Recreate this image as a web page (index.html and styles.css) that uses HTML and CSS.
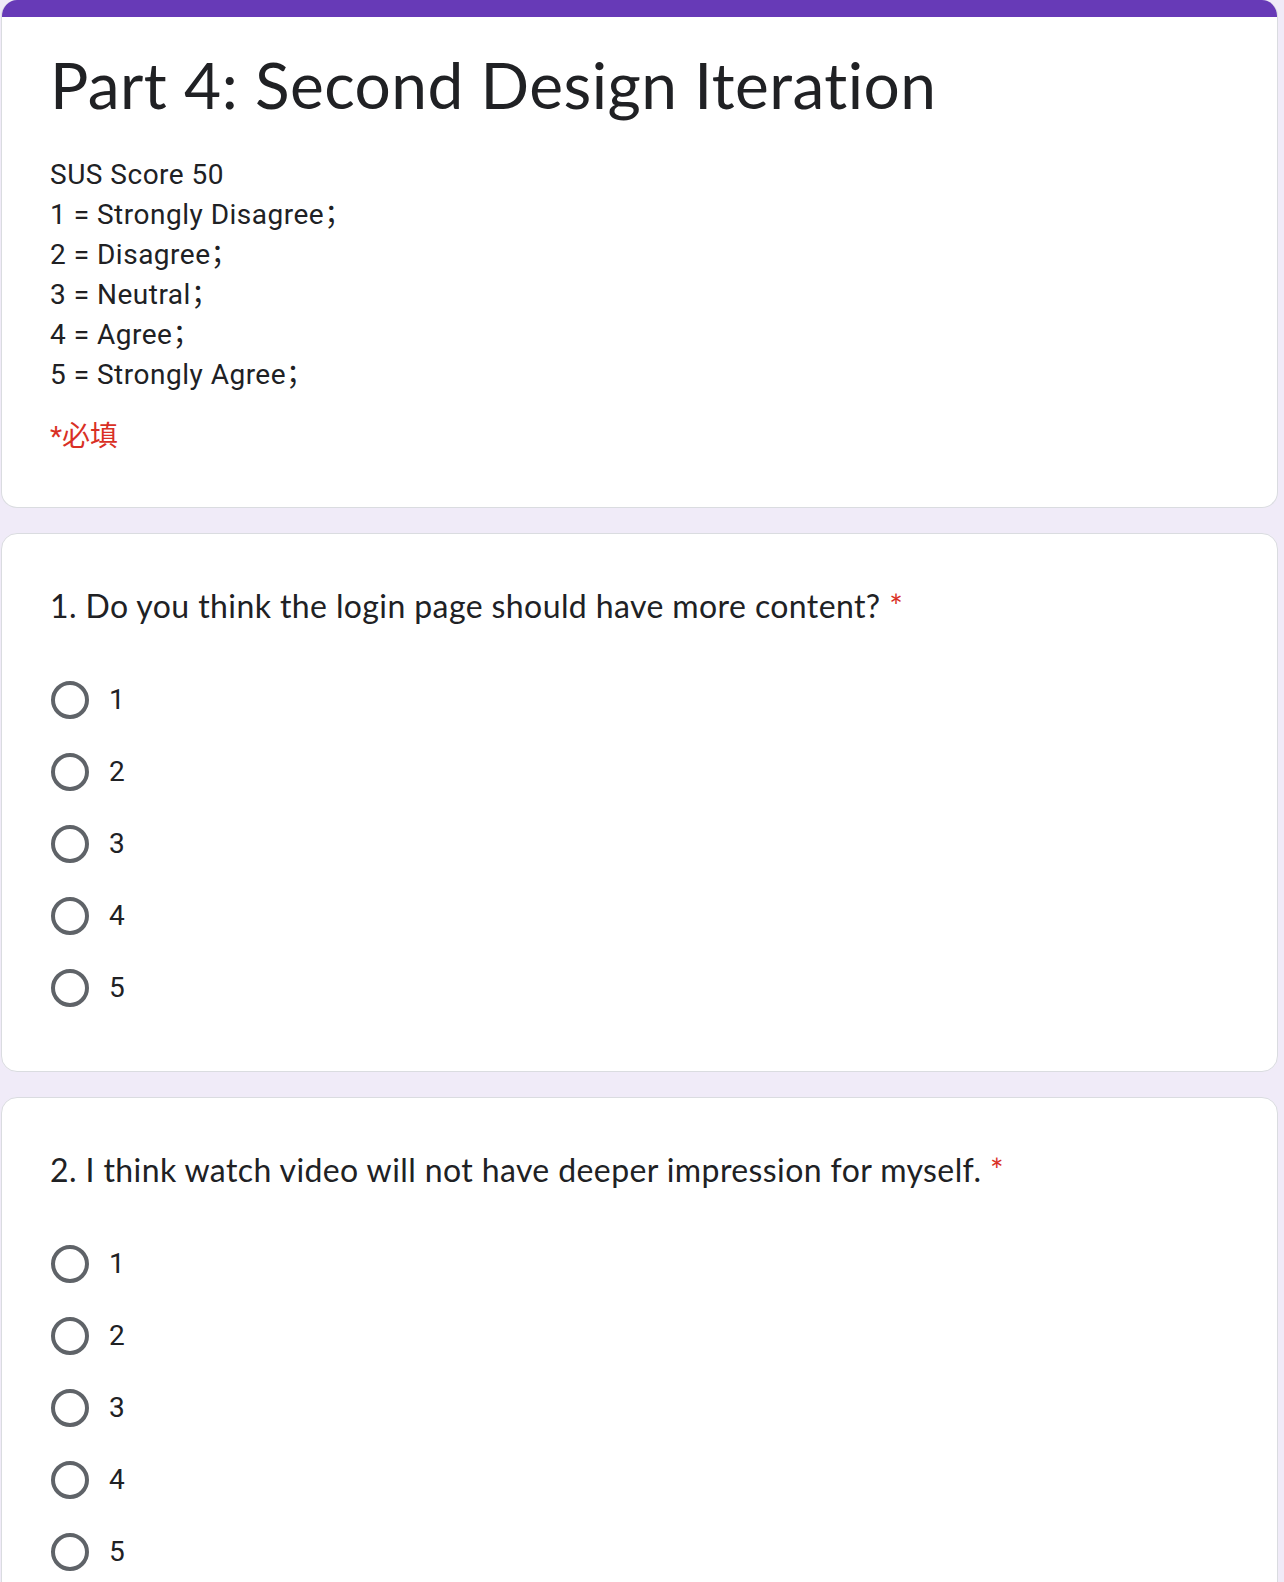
FILE: index.html
```html
<!DOCTYPE html>
<html lang="zh">
<head>
<meta charset="utf-8">
<title>Part 4: Second Design Iteration</title>
<link rel="stylesheet" href="styles.css">
</head>
<body>
<main class="form">
  <section class="card header-card">
    <div class="accent"></div>
    <div class="header-body">
      <h1 class="title">Part 4: Second Design Iteration</h1>
      <div class="desc">
        <div>SUS Score 50</div>
        <div>1 = Strongly Disagree；</div>
        <div>2 = Disagree；</div>
        <div>3 = Neutral；</div>
        <div>4 = Agree；</div>
        <div>5 = Strongly Agree；</div>
      </div>
      <div class="required-note">*必填</div>
    </div>
  </section>

  <section class="card question">
    <div class="q-title">1. Do you think the login page should have more content? <span class="star">*</span></div>
    <div class="options">
      <label class="opt"><span class="radio"></span><span class="opt-label">1</span></label>
      <label class="opt"><span class="radio"></span><span class="opt-label">2</span></label>
      <label class="opt"><span class="radio"></span><span class="opt-label">3</span></label>
      <label class="opt"><span class="radio"></span><span class="opt-label">4</span></label>
      <label class="opt"><span class="radio"></span><span class="opt-label">5</span></label>
    </div>
  </section>

  <section class="card question">
    <div class="q-title">2. I think watch video will not have deeper impression for myself. <span class="star">*</span></div>
    <div class="options">
      <label class="opt"><span class="radio"></span><span class="opt-label">1</span></label>
      <label class="opt"><span class="radio"></span><span class="opt-label">2</span></label>
      <label class="opt"><span class="radio"></span><span class="opt-label">3</span></label>
      <label class="opt"><span class="radio"></span><span class="opt-label">4</span></label>
      <label class="opt"><span class="radio"></span><span class="opt-label">5</span></label>
    </div>
  </section>
</main>
</body>
</html>
```

FILE: styles.css
```css
html, body {
  margin: 0;
  padding: 0;
}
body {
  background: #f0ebf8;
  font-family: Roboto, "Noto Sans CJK SC", sans-serif;
  color: #202124;
}
.form {
  display: flex;
  flex-direction: column;
  gap: 25px;
  padding: 0 6px 40px 1px;
}
.card {
  background: #fff;
  border: 1px solid #dadce0;
  border-radius: 16px;
  overflow: hidden;
}
.header-card {
  border-top: none;
}
.accent {
  height: 17px;
  background: #673ab7;
}
.header-body {
  padding: 28px 48px 50px;
}
.title {
  margin: 0;
  font-family: Lato, sans-serif;
  font-weight: 400;
  font-size: 64px;
  line-height: 80px;
  letter-spacing: 0.45px;
  color: #202124;
}
.desc {
  margin-top: 30px;
  font-size: 28px;
  line-height: 40px;
  letter-spacing: 0.5px;
}
.required-note {
  margin-top: 22px;
  color: #d93025;
  font-size: 28px;
  line-height: 40px;
}
.question {
  padding: 50px 48px 64px;
}
.q-title {
  font-family: Lato, sans-serif;
  font-size: 32px;
  line-height: 44px;
  letter-spacing: 0.4px;
}
.star {
  color: #d93025;
}
.options {
  margin-top: 53px;
  display: flex;
  flex-direction: column;
  gap: 34px;
}
.opt {
  display: flex;
  align-items: center;
  gap: 20px;
  height: 38px;
  padding-left: 1px;
}
.radio {
  width: 30px;
  height: 30px;
  border: 4px solid #5f6368;
  border-radius: 50%;
  flex: none;
}
.opt-label {
  font-size: 28px;
  line-height: 38px;
}
```
